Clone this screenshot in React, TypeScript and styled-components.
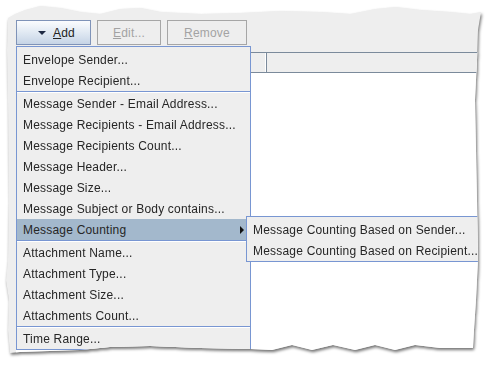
import React from 'react';
import styled, { createGlobalStyle } from 'styled-components';

const GlobalStyle = createGlobalStyle`
  html, body {
    margin: 0;
    padding: 0;
    background: #ffffff;
  }
  body {
    font-family: "Liberation Sans", Arial, sans-serif;
  }
`;

// torn paper outline, page coords shifted by the 4px page padding
const tornPoints: [number, number][] = [
  [8, 18], [15, 14], [25, 10], [40, 6], [60, 8], [80, 12], [100, 14], [120, 9],
  [140, 8], [160, 12], [200, 14], [240, 13], [280, 11], [320, 12], [350, 14],
  [375, 9], [395, 7], [420, 10], [450, 12], [470, 14], [481, 12],
  [478, 30], [477, 60], [475, 100], [476, 150], [477, 200], [478, 260],
  [476, 300], [474, 330], [473, 348],
  [440, 348], [415, 345], [395, 350], [375, 345], [355, 350], [333, 345],
  [312, 350], [292, 345], [272, 350], [250, 349], [200, 348], [150, 346],
  [110, 347], [80, 350], [50, 351], [20, 352], [10, 353],
  [8, 330], [9, 300], [6, 280], [8, 260], [9, 200], [8, 100], [7, 50],
];
const tornPolygon = `polygon(${tornPoints
  .map(([x, y]) => `${x - 4}px ${y - 4}px`)
  .join(', ')})`;

const Page = styled.div`
  width: 489px;
  height: 366px;
  padding: 4px 0 0 4px;
  box-sizing: border-box;
  overflow: hidden;
`;

const Shadow = styled.div`
  width: 480px;
  height: 356px;
  filter: drop-shadow(1px 2px 1.5px rgba(0, 0, 0, 0.55));
`;

const Panel = styled.div`
  position: relative;
  width: 100%;
  height: 100%;
  box-sizing: border-box;
  padding: 16px 0 0 12px;
  background: #eeeeee;
  clip-path: ${tornPolygon};
  display: flex;
  flex-direction: column;
`;

const Toolbar = styled.div`
  display: flex;
  gap: 6px;
  height: 25px;
`;

const MenuAnchor = styled.div`
  position: relative;
  z-index: 10;
`;

const ToolButton = styled.button<{ $armed?: boolean; $w: number }>`
  width: ${(p) => p.$w}px;
  height: 25px;
  box-sizing: border-box;
  margin: 0;
  padding: 0;
  display: flex;
  align-items: center;
  justify-content: center;
  font-family: "Liberation Sans", Arial, sans-serif;
  font-size: 12px;
  letter-spacing: 0.2px;
  border-radius: 0;
  border: 1px solid ${(p) => (p.$armed ? '#7f93b8' : '#a6a6a6')};
  background: ${(p) =>
    p.$armed ? 'linear-gradient(#fbfcfe 0%, #e3ebf4 45%, #c6d4e6 100%)' : '#eeeeee'};
  color: ${(p) => (p.$armed ? '#222222' : '#a3a3a3')};
  ${(p) => (p.$armed ? 'padding-left: 6px;' : '')}
`;

const DownArrow = styled.span`
  width: 0;
  height: 0;
  border-left: 4px solid transparent;
  border-right: 4px solid transparent;
  border-top: 4px solid #1e2a44;
  margin-right: 7px;
`;

const Table = styled.div`
  flex: 1;
  margin-top: 7px;
  background: #ffffff;
  display: flex;
  flex-direction: column;
`;

const HeaderRow = styled.div`
  height: 21px;
  box-sizing: border-box;
  border-top: 1px solid #7b8a9b;
  border-bottom: 1px solid #7b8a9b;
  background: #eeeeee;
  display: flex;
`;

const HeaderCell = styled.div<{ $w?: number }>`
  ${(p) => (p.$w ? `width: ${p.$w}px;` : 'flex: 1;')}
  box-sizing: border-box;
  border-right: 1px solid #7b8a9b;
  box-shadow: inset -1px 0 0 #ffffff;
`;

const Menu = styled.div<{ $w: number }>`
  position: absolute;
  top: calc(100% + 1px);
  left: 0;
  width: ${(p) => p.$w}px;
  box-sizing: border-box;
  border: 1px solid #7896d2;
  background: #eeeeee;
  padding-top: 2px;
`;

const SubMenu = styled(Menu)`
  top: -3px;
  left: calc(100% - 4px);
`;

const Item = styled.div<{ $active?: boolean }>`
  position: relative;
  height: 21px;
  box-sizing: border-box;
  padding: 1px 0 0 6px;
  line-height: 21px;
  font-size: 12px;
  letter-spacing: 0.2px;
  color: #262626;
  white-space: nowrap;
  background: ${(p) => (p.$active ? '#a3b8cc' : 'transparent')};
`;

const RightArrow = styled.span`
  position: absolute;
  right: 6px;
  top: 7px;
  width: 0;
  height: 0;
  border-top: 4px solid transparent;
  border-bottom: 4px solid transparent;
  border-left: 4px solid #111111;
`;

const Separator = styled.div`
  height: 2px;
  box-sizing: border-box;
  border-top: 1px solid #7896d2;
  border-bottom: 1px solid #ffffff;
`;

type Entry = string | null;

const entries: Entry[] = [
  'Envelope Sender...',
  'Envelope Recipient...',
  null,
  'Message Sender - Email Address...',
  'Message Recipients - Email Address...',
  'Message Recipients Count...',
  'Message Header...',
  'Message Size...',
  'Message Subject or Body contains...',
  'Message Counting',
  null,
  'Attachment Name...',
  'Attachment Type...',
  'Attachment Size...',
  'Attachments Count...',
  null,
  'Time Range...',
];

const subEntries = [
  'Message Counting Based on Sender...',
  'Message Counting Based on Recipient...',
];

export default function App() {
  return (
    <>
      <GlobalStyle />
      <Page>
        <Shadow>
          <Panel>
            <Toolbar>
              <MenuAnchor>
                <ToolButton $armed $w={75}>
                  <DownArrow />
                  <span><u>A</u>dd</span>
                </ToolButton>
                <Menu $w={235}>
                  {entries.map((e, i) =>
                    e === null ? (
                      <Separator key={`sep-${i}`} />
                    ) : e === 'Message Counting' ? (
                      <Item key={e} $active>
                        {e}
                        <RightArrow />
                        <SubMenu $w={240}>
                          {subEntries.map((s) => (
                            <Item key={s}>{s}</Item>
                          ))}
                        </SubMenu>
                      </Item>
                    ) : (
                      <Item key={e}>{e}</Item>
                    )
                  )}
                </Menu>
              </MenuAnchor>
              <ToolButton $w={64} disabled>
                <span><u>E</u>dit...</span>
              </ToolButton>
              <ToolButton $w={80} disabled>
                <span><u>R</u>emove</span>
              </ToolButton>
            </Toolbar>
            <Table>
              <HeaderRow>
                <HeaderCell $w={251} />
                <HeaderCell />
              </HeaderRow>
            </Table>
          </Panel>
        </Shadow>
      </Page>
    </>
  );
}
